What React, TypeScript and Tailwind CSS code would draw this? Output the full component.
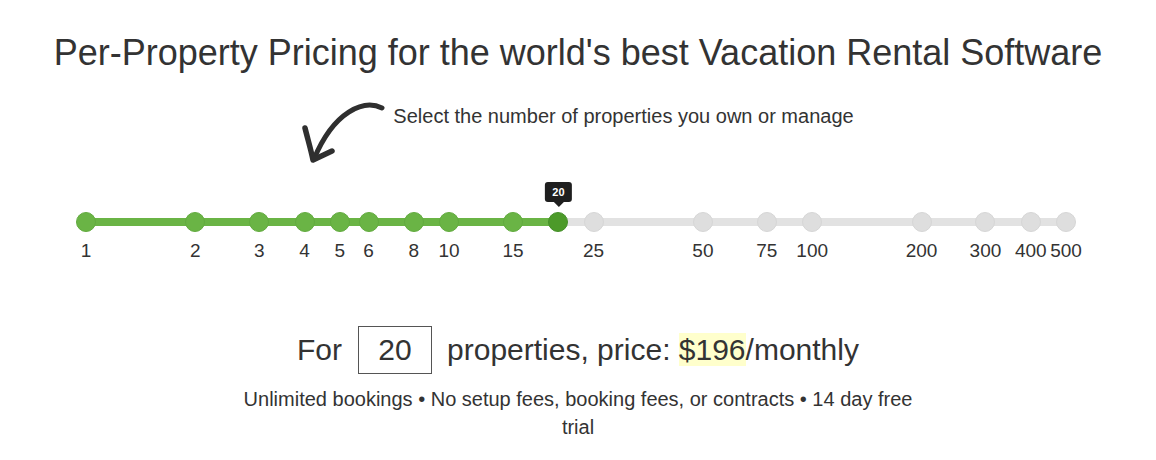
import React, { useState } from 'react';

const STOPS = [1, 2, 3, 4, 5, 6, 8, 10, 15, 20, 25, 50, 75, 100, 200, 300, 400, 500];
const TRACK_WIDTH = 980;
const MAX = 500;

const posOf = (n: number) => (Math.log10(n) / Math.log10(MAX)) * TRACK_WIDTH;

const HandArrow: React.FC = () => (
  <svg width="93" height="75" viewBox="0 0 93 75" className="shrink-0">
    <path
      d="M80 13 C62 4, 32 16, 12 64"
      fill="none"
      stroke="#2f2f2f"
      strokeWidth="5"
      strokeLinecap="round"
    />
    <path
      d="M3 33 C6 45, 9 55, 11 65 L30 56"
      fill="none"
      stroke="#2f2f2f"
      strokeWidth="5.5"
      strokeLinecap="round"
      strokeLinejoin="round"
    />
  </svg>
);

const App: React.FC = () => {
  const [count, setCount] = useState(20);
  const price = 196;
  const selectedX = posOf(count);

  return (
    <div className="w-[1156px] h-[460px] bg-white text-[#333] font-['Liberation_Sans',Arial,sans-serif] overflow-hidden">
      <h1 className="pt-[33px] text-center text-[36px] leading-[40px] font-normal">
        Per-Property Pricing for the world's best Vacation Rental Software
      </h1>

      <div className="mt-[22px] flex justify-center items-start">
        <HandArrow />
        <div className="mt-[10px] -ml-[2px] text-[20px] leading-[22px]">
          Select the number of properties you own or manage
        </div>
      </div>

      {/* slider */}
      <div className="mt-[10px] ml-[86px] w-[980px] h-[85px] relative">
        <div className="absolute left-0 right-0 top-[38px] h-[8px] rounded-full bg-[#e2e2e2]" />
        <div
          className="absolute left-0 top-[38px] h-[8px] rounded-full bg-[#6ab445]"
          style={{ width: selectedX }}
        />
        {STOPS.map((n) => {
          const x = posOf(n);
          const active = n <= count;
          const selected = n === count;
          return (
            <React.Fragment key={n}>
              <button
                onClick={() => setCount(n)}
                className={
                  selected
                    ? 'absolute top-[32px] -ml-[10px] w-[20px] h-[20px] rounded-full bg-[#4c9a29] border border-[#45902a]'
                    : active
                    ? 'absolute top-[32px] -ml-[10px] w-[20px] h-[20px] rounded-full bg-[#6ab445] border border-[#62ab3f]'
                    : 'absolute top-[32px] -ml-[10px] w-[20px] h-[20px] rounded-full bg-[#dedede] border border-[#d6d6d6]'
                }
                style={{ left: x }}
              />
              {!selected && (
                <div
                  className="absolute top-[60px] w-[40px] -ml-[20px] text-center text-[19px] leading-[22px] text-[#333]"
                  style={{ left: x }}
                >
                  {n}
                </div>
              )}
            </React.Fragment>
          );
        })}
        <div
          className="absolute top-[2px] -translate-x-1/2 flex flex-col items-center"
          style={{ left: selectedX }}
        >
          <div className="h-[20px] px-[7px] rounded-[3px] bg-[#1f1f1f] text-white text-[11px] font-bold leading-[20px]">
            {count}
          </div>
          <div className="w-0 h-0 border-l-[5px] border-r-[5px] border-t-[5px] border-l-transparent border-r-transparent border-t-[#1f1f1f]" />
        </div>
      </div>

      {/* price row */}
      <div className="mt-[61px] flex justify-center items-center text-[30px] leading-[34px]">
        <span>For</span>
        <div className="ml-[16px] mr-[15px] w-[74px] h-[48px] border-[1.5px] border-[#555] flex items-center justify-center">
          {count}
        </div>
        <span>
          properties, price: <span className="bg-[#ffffcc]">${price}</span>/monthly
        </span>
      </div>

      <p className="mt-[11px] mx-auto w-[680px] text-center text-[20px] leading-[28px]">
        Unlimited bookings • No setup fees, booking fees, or contracts • 14 day free trial
      </p>
    </div>
  );
};

export default App;
